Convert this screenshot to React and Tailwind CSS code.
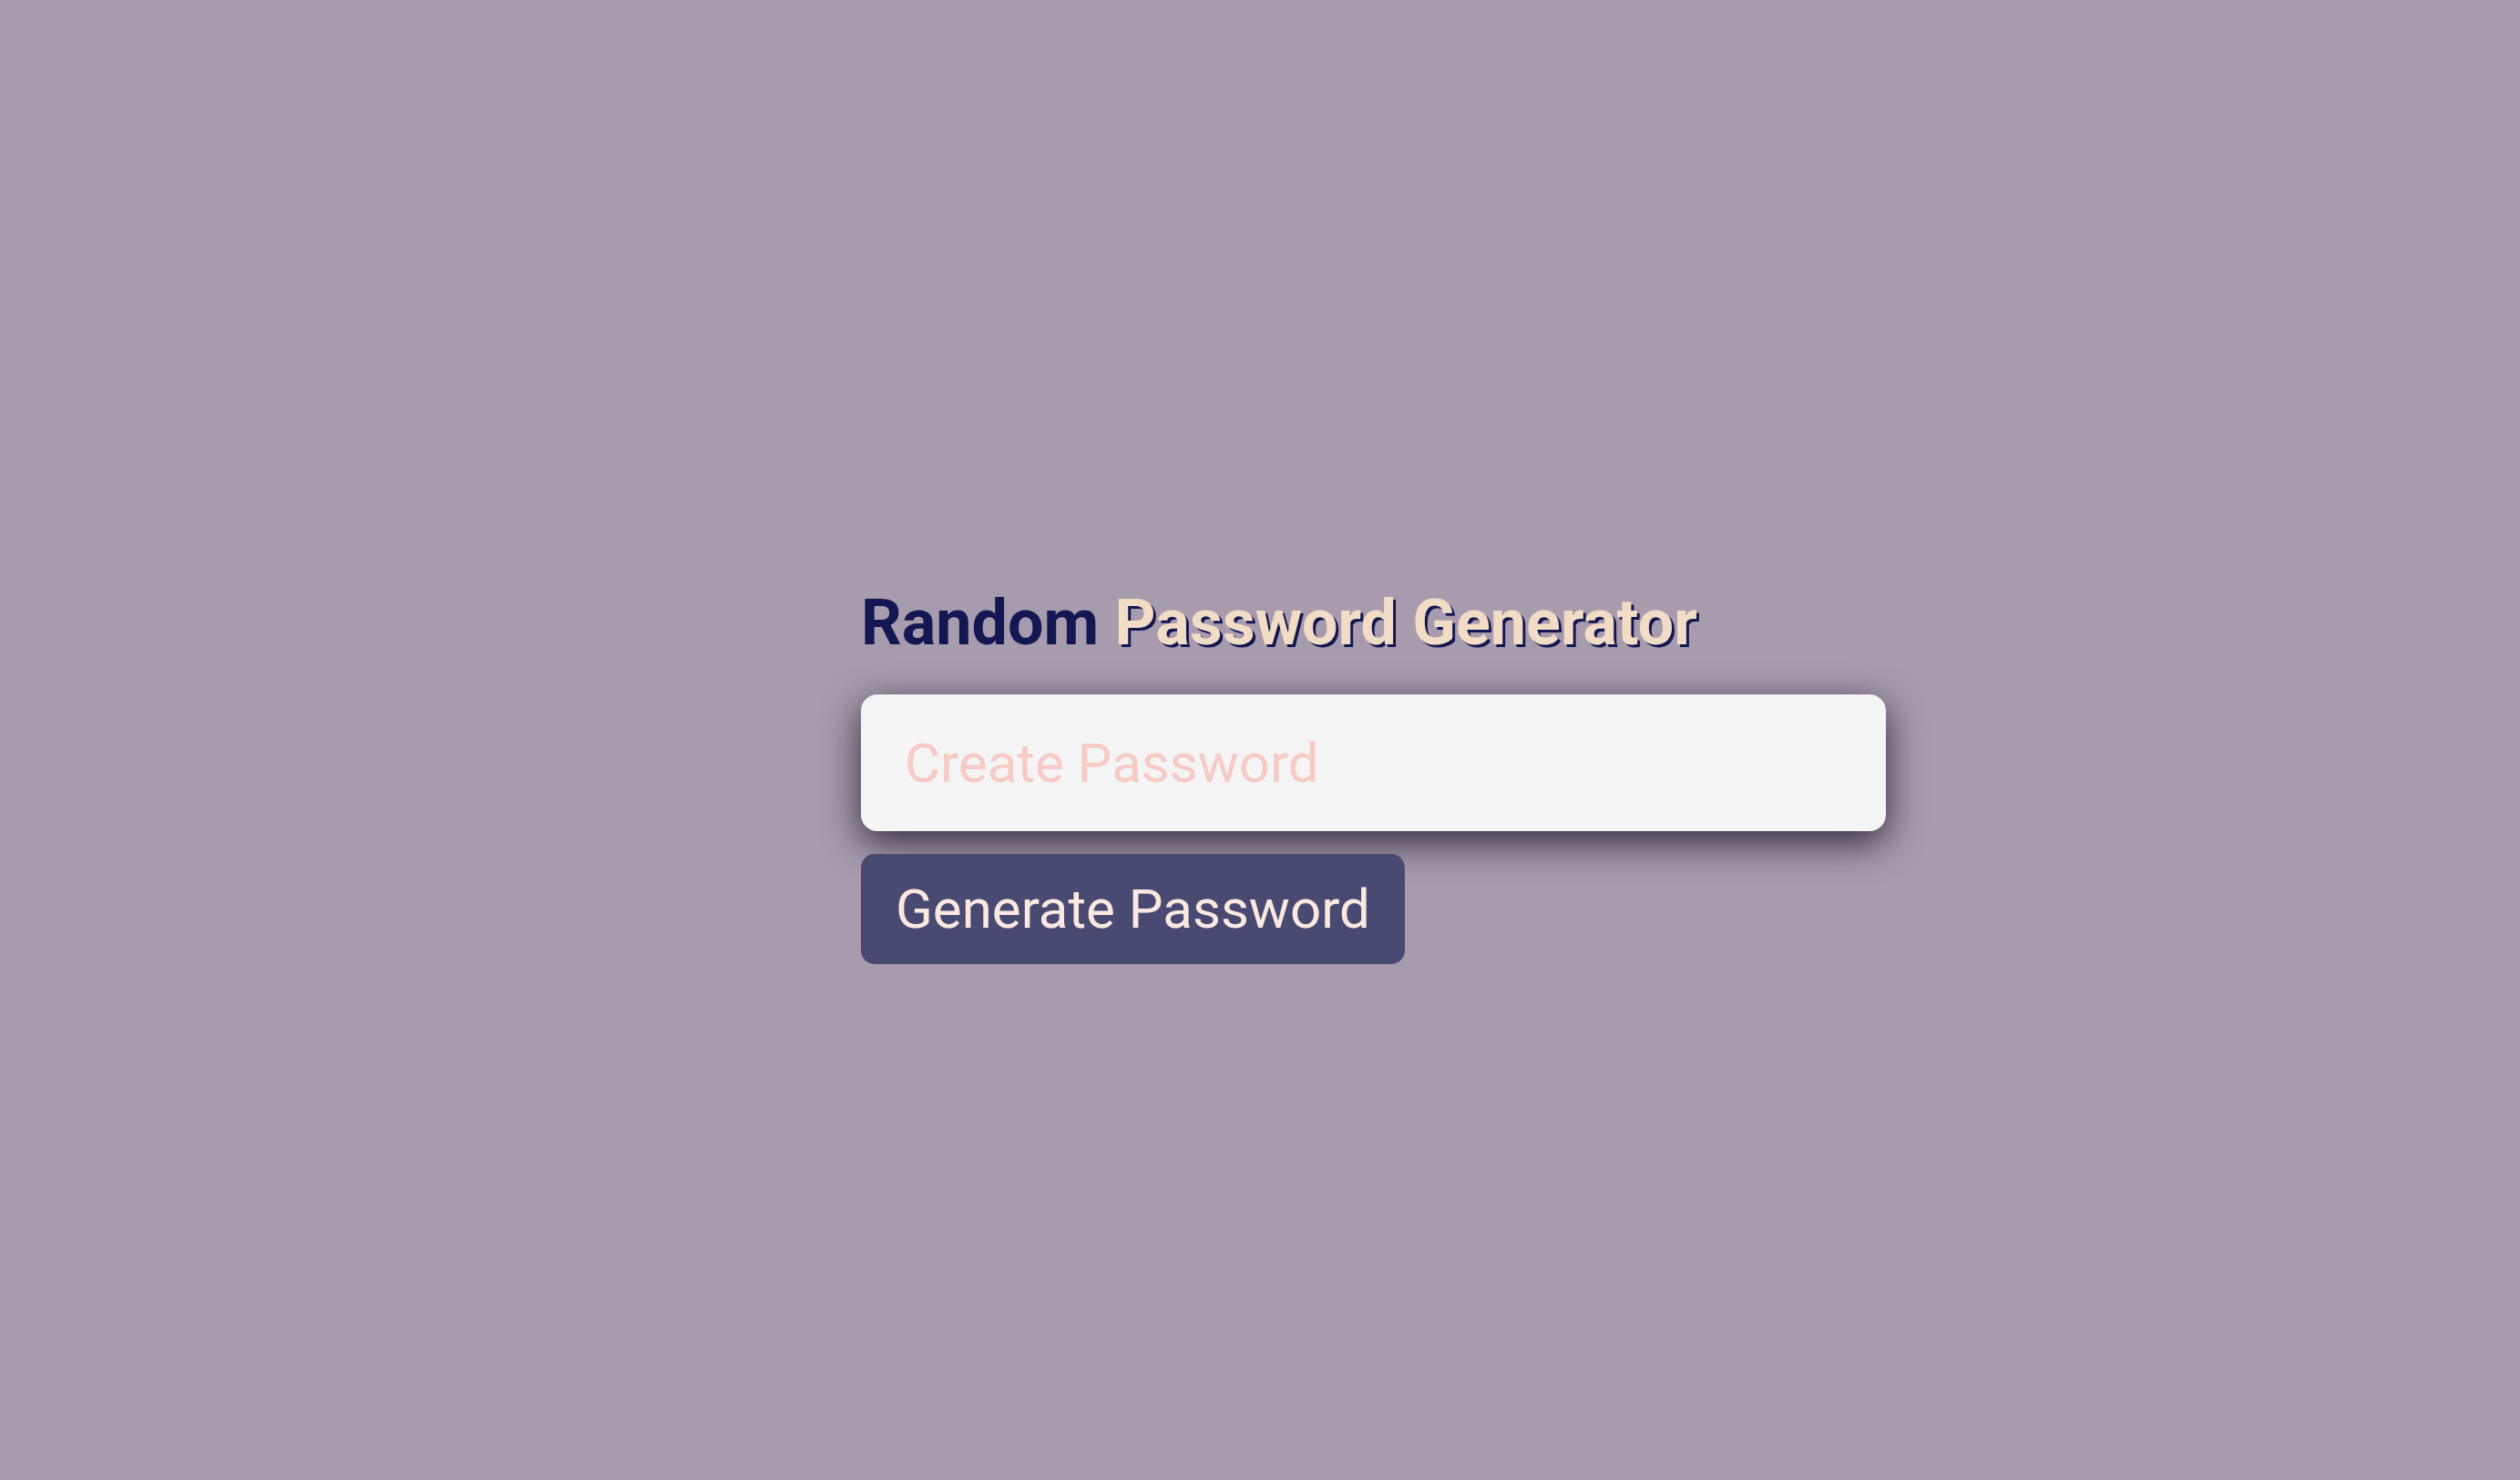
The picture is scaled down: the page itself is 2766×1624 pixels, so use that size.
export default function App() {
  return (
    <div className="min-h-screen w-full bg-[#a79cad] font-['Roboto',sans-serif]">
      <div className="flex flex-col items-start pl-[945px] pt-[642px]">
        <h1 className="text-[70px] font-bold leading-[82px] text-[#141852]">
          Random{" "}
          <span className="text-[#f1dcc6] [text-shadow:3px_3px_0_#141852]">
            Password Generator
          </span>
        </h1>
        <input
          type="text"
          placeholder="Create Password"
          className="mt-[38px] h-[150px] w-[1125px] rounded-[18px] bg-[#f4f4f4] px-[48px] text-[60px] text-[#141852] outline-none shadow-[0_12px_40px_rgba(20,10,30,0.8)] placeholder:text-[#f5cbc3]"
        />
        <button className="mt-[25px] h-[121px] rounded-[15px] bg-[#494a72] px-[38px] text-[60px] leading-[70px] text-[#fde8e0]">
          Generate Password
        </button>
      </div>
    </div>
  );
}
